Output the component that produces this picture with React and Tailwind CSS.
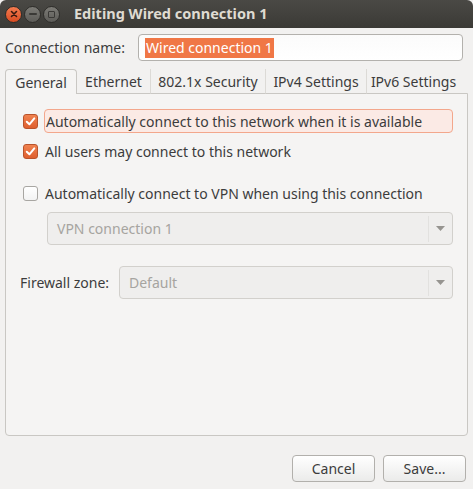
import React from "react";

const font = { fontFamily: "'Noto Sans', 'Open Sans', sans-serif" };

function Check({ checked }) {
  if (!checked) {
    return (
      <span className="block h-[15px] w-[15px] shrink-0 rounded-[3px] border border-[#a8a6a2] bg-gradient-to-b from-white to-[#f3f3f3]" />
    );
  }
  return (
    <span className="flex h-[15px] w-[15px] shrink-0 items-center justify-center rounded-[3px] border border-[#b9532b] bg-gradient-to-b from-[#f0824f] to-[#df5f2f]">
      <svg width="11" height="11" viewBox="0 0 11 11">
        <path d="M1.8 5.8 L4.4 8.3 L9.3 2.4" fill="none" stroke="white" strokeWidth="2" strokeLinecap="round" strokeLinejoin="round" />
      </svg>
    </span>
  );
}

function Combo({ value, className }) {
  return (
    <div className={`flex h-[33px] items-center rounded-[4px] border border-[#d2d0cc] bg-[#efeeed] ${className}`}>
      <span className="flex-1 pl-[9px] text-[#a6a4a0]">{value}</span>
      <span className="h-[26px] w-px bg-[#e2e1df]" />
      <span className="flex w-[23px] justify-center">
        <svg width="9" height="5" viewBox="0 0 9 5">
          <path d="M0 0 L9 0 L4.5 5 Z" fill="#969490" />
        </svg>
      </span>
    </div>
  );
}

function WinButton({ children, className }) {
  return (
    <span className={`flex h-[17px] w-[17px] items-center justify-center rounded-full ${className}`}>{children}</span>
  );
}

export default function App() {
  const tabs = ["Ethernet", "802.1x Security", "IPv4 Settings", "IPv6 Settings"];
  const widths = ["w-[73px]", "w-[115px]", "w-[101px]", "w-[94px]"];

  return (
    <div style={font} className="flex h-[489px] w-[473px] flex-col bg-[#f2f1f0] text-[14px] text-[#3c3c3c]">
      <div className="flex h-[28px] items-center rounded-t-[6px] bg-gradient-to-b from-[#4a4945] to-[#3b3a36]">
        <div className="ml-[5px] flex items-center gap-[2px]">
          <WinButton className="bg-gradient-to-b from-[#f37b4f] to-[#d94b20] border border-[#2e2d2a]">
            <svg width="8" height="8" viewBox="0 0 8 8">
              <path d="M1.5 1.5 L6.5 6.5 M6.5 1.5 L1.5 6.5" stroke="#3a1a10" strokeWidth="1.6" strokeLinecap="round" />
            </svg>
          </WinButton>
          <WinButton className="bg-gradient-to-b from-[#7c7b76] to-[#5d5c58] border border-[#2e2d2a]">
            <span className="h-[2px] w-[8px] rounded bg-[#3a3936]" />
          </WinButton>
          <WinButton className="bg-gradient-to-b from-[#7c7b76] to-[#5d5c58] border border-[#2e2d2a]">
            <span className="h-[7px] w-[7px] rounded-[1px] border-[1.5px] border-[#3a3936]" />
          </WinButton>
        </div>
        <span className="ml-[14px] text-[14.5px] font-bold text-[#dfdbd2]">Editing Wired connection 1</span>
      </div>

      <div className="mt-[6px] flex items-center pl-[5px]">
        <span className="w-[133px]">Connection name:</span>
        <div className="flex h-[27px] w-[325px] items-center rounded-[4px] border border-[#b3b1ad] bg-gradient-to-b from-[#fbfbfb] to-white pl-[6px]">
          <span className="bg-[#f07746] px-px leading-[20px] text-white">Wired connection 1</span>
        </div>
      </div>

      <div className="relative z-10 mt-[8px] -mb-px ml-[5px] flex h-[25px] items-stretch">
        <div className="flex w-[72px] items-center justify-center rounded-t-[4px] border border-b-0 border-[#c9c7c3] bg-[#f5f4f3]">
          General
        </div>
        {tabs.map((t, i) => (
          <div
            key={t}
            className={`flex ${widths[i]} items-center justify-center border-b border-[#c9c7c3] ${i > 0 ? "border-l border-l-[#dcdad6]" : ""}`}
          >
            {t}
          </div>
        ))}
      </div>

      <div className="mx-[5px] flex h-[343px] flex-col rounded-b-[4px] border border-[#c9c7c3] bg-[#f5f4f3] pt-[15px]">
        <div className="flex h-[24px] items-center">
          <span className="ml-[17px]"><Check checked /></span>
          <span className="ml-[6px] flex h-[24px] w-[409px] items-center rounded-[4px] border border-[#f3a78c] bg-[#fbeae5] pl-[1px]">
            Automatically connect to this network when it is available
          </span>
        </div>
        <div className="mt-[6px] flex h-[24px] items-center">
          <span className="ml-[17px]"><Check checked /></span>
          <span className="ml-[7px]">All users may connect to this network</span>
        </div>
        <div className="mt-[18px] flex h-[24px] items-center">
          <span className="ml-[17px]"><Check /></span>
          <span className="ml-[7px]">Automatically connect to VPN when using this connection</span>
        </div>
        <Combo value="VPN connection 1" className="ml-[41px] mt-[7px] w-[406px]" />
        <div className="mt-[21px] flex items-center">
          <span className="ml-[14px] w-[99px]">Firewall zone:</span>
          <Combo value="Default" className="w-[334px]" />
        </div>
      </div>

      <div className="mt-[19px] flex justify-end gap-[8px] pr-[7px]">
        <button className="h-[27px] w-[83px] rounded-[4px] border border-[#b2b0ac] bg-gradient-to-b from-white to-[#ebebea]">Cancel</button>
        <button className="h-[27px] w-[83px] rounded-[4px] border border-[#b2b0ac] bg-gradient-to-b from-white to-[#ebebea]">Save...</button>
      </div>
    </div>
  );
}
